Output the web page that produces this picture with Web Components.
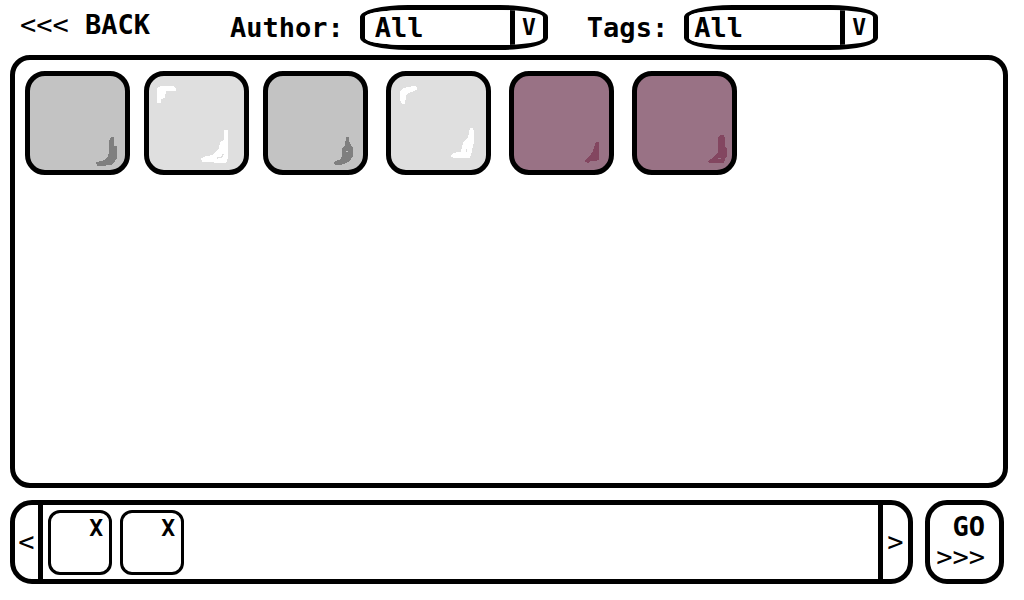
<!DOCTYPE html>
<html lang="en">
<head>
<meta charset="utf-8">
<title>Tile picker</title>
<style>
html { background: #fff; }
body { margin: 0; color: #000; font: bold 27px/32px "DejaVu Sans Mono", monospace; }
</style>
</head>
<body>
<picker-page></picker-page>
<script>
const define = (name, html, setup) => customElements.define(name, class extends HTMLElement {
  connectedCallback() {
    if (this.shadowRoot) return;
    const t = document.createElement('template');
    t.innerHTML = html;
    this.attachShadow({ mode: 'open' }).append(t.content.cloneNode(true));
    if (setup) setup(this, this.shadowRoot);
  }
});

define('filter-select', `
<style>
:host { display: flex; align-items: center; gap: 16px; }
.box { position: relative; box-sizing: border-box; display: flex; width: var(--box-width, 188px); height: 45px; border: 5px solid; border-radius: 48px / 12px; overflow: hidden; }
select { appearance: none; flex: 1; min-width: 0; margin: 0; padding: 0 0 0 var(--inset, 10px); border: 0; border-radius: 0; background: #fff; color: inherit; font: inherit; }
.arrow { flex: none; box-sizing: border-box; width: 33px; border-left: 5px solid; text-align: center; font-size: 23px; line-height: 34px; pointer-events: none; }
</style>
<label for="s"></label>
<div class="box"><select id="s"><option>All</option></select><span class="arrow" aria-hidden="true">V</span></div>`,
(el, root) => { root.querySelector('label').textContent = el.getAttribute('label'); });

const marks = {
  stone: '<path fill="#7f7f7f" d="M243 183H252V210H261V246L252 261 243 267H228L225 270H201L198 258 213 255 225 252 234 240 237 228V195Z"/>',
  ice: '<path fill="#fff" d="M24 81V36L36 30H72L81 36V45H51L48 66 36 69V81Z M225 162H237V246L231 261H196L192 258H159L156 248 171 240 192 237 210 217 213 198 225 191Z"/><path fill="none" stroke="#dfdfdf" stroke-width="4" d="M204 246L216 244 224 234"/>',
  rock: '<path fill="#7f7f7f" d="M234 183H243L244 198 249 207 255 215V240L246 255 234 261 222 266H201L198 259 210 252 219 249 222 240V219L231 207Z"/><path fill="#c3c3c3" d="M235 225h4v4h-4z"/>',
  frost: '<path fill="#fff" d="M27 48L36 36 54 33 66 30 78 32V41L69 46 51 51 45 60 42 83H32L27 71Z M237 156H246L249 168V198L240 237 235 246H190L177 240 183 234 198 229 210 227 216 201 231 183Z"/><path fill="#dfdfdf" d="M224 219h3v9h-3z"/>',
  plum: '<path fill="#834660" d="M246 198H255V251L243 256H228L222 261 213 258 214 252 228 239 237 225Z"/>',
  wine: '<path fill="#834660" d="M249 177H259L264 186V213L270 216V243L264 248 261 261H216L213 255 228 246 241 231 244 228V183Z"/><path fill="#997285" d="M243 245h9v3h-9z"/>'
};
define('tile-item', `
<style>
:host { display: block; }
button { display: block; box-sizing: border-box; width: 105px; height: 104px; margin: 0; padding: 0; border: 5px solid #000; border-radius: 20px; background: var(--fill); overflow: hidden; }
svg { display: block; width: 100%; height: 100%; }
</style>
<button><svg viewBox="0 0 285 282" shape-rendering="crispEdges" aria-hidden="true"></svg></button>`,
(el, root) => {
  const kind = el.getAttribute('kind');
  root.querySelector('svg').innerHTML = marks[kind];
  root.querySelector('button').setAttribute('aria-label', kind);
});

define('tile-board', `
<style>
:host { display: flex; flex-wrap: wrap; align-content: flex-start; gap: 18px; box-sizing: border-box; padding: 11px 10px; border: 5px solid; border-radius: 20px; }
</style>
<slot></slot>`);

define('tile-group', `
<style>
:host { display: flex; flex-wrap: wrap; gap: var(--group-gap, 14px); }
</style>
<slot></slot>`);

define('picked-slot', `
<style>
:host { box-sizing: border-box; display: flex; justify-content: flex-end; width: 64px; height: 65px; padding: 0 6px; border: 3px solid; border-radius: 12px; }
button { align-self: flex-start; margin: 0; padding: 0; border: 0; background: none; color: inherit; font: inherit; font-size: 23px; line-height: 30px; }
</style>
<button>X</button>`);

define('picked-tray', `
<style>
:host { display: flex; box-sizing: border-box; border: 5px solid; border-radius: 22px; overflow: hidden; }
button { flex: none; box-sizing: border-box; width: 28px; margin: 0; padding: 0; border: 0 solid #000; background: none; color: inherit; font: inherit; font-weight: normal; }
.prev { border-right-width: 5px; }
.next { width: 30px; border-left-width: 5px; }
.items { flex: 1; display: flex; align-items: center; gap: 8px; padding: 0 5px; }
</style>
<button class="prev">&lt;</button>
<div class="items"><slot></slot></div>
<button class="next">&gt;</button>`);

define('picker-page', `
<style>
:host { display: flex; flex-direction: column; box-sizing: border-box; min-height: 100vh; padding: 0 16px 16px 10px; }
header { display: flex; align-items: flex-start; height: 50px; padding: 5px 0 0 10px; }
.back { margin: 0 80px 0 0; padding: 4px 0; border: 0; background: none; color: inherit; font: inherit; white-space: pre; }
.thin { font-weight: normal; }
filter-select + filter-select { --box-width: 194px; --inset: 5px; margin-left: 39px; }
tile-board { flex: 1; }
.wide { --group-gap: 18px; }
[kind=stone], [kind=rock] { --fill: #c3c3c3; }
[kind=ice], [kind=frost] { --fill: #dfdfdf; }
[kind=plum], [kind=wine] { --fill: #997285; }
footer { display: flex; gap: 12px; margin-top: 12px; height: 84px; }
picked-tray { flex: 1; }
.go { box-sizing: border-box; width: 79px; margin: 0 4px 0 0; padding: 0 14px 0 6px; border: 5px solid; border-radius: 22px; background: #fff; color: inherit; font: inherit; line-height: 30px; text-align: right; }
.go span { display: block; }
</style>
<header>
<button class="back"><span class="thin">&lt;&lt;&lt;</span> BACK</button>
<filter-select label="Author:"></filter-select>
<filter-select label="Tags:"></filter-select>
</header>
<tile-board>
<tile-group><tile-item kind="stone"></tile-item><tile-item kind="ice"></tile-item><tile-item kind="rock"></tile-item></tile-group>
<tile-group class="wide"><tile-item kind="frost"></tile-item><tile-item kind="plum"></tile-item><tile-item kind="wine"></tile-item></tile-group>
</tile-board>
<footer>
<picked-tray><picked-slot></picked-slot><picked-slot></picked-slot></picked-tray>
<button class="go"><span>GO</span><span class="thin">&gt;&gt;&gt;</span></button>
</footer>`);
</script>
</body>
</html>
